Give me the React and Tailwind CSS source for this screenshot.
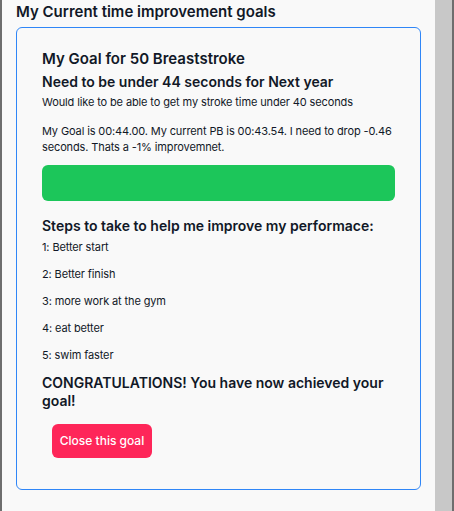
import React from 'react';

const steps = [
  '1: Better start',
  '2: Better finish',
  '3: more work at the gym',
  '4: eat better',
  '5: swim faster',
];

const GoalCard = () => {
  return (
    <div className="mt-[3px] rounded-md border border-[#2f86f7] px-[25px] pt-[21px] pb-[31px]">
      <h2 className="text-[15px] leading-5 font-semibold">My Goal for 50 Breaststroke</h2>
      <h3 className="text-[14px] leading-5 font-semibold mt-[3px]">Need to be under 44 seconds for Next year</h3>
      <p className="text-[11px] leading-4 tracking-[-0.12px] mt-[2px]">Would like to be able to get my stroke time under 40 seconds</p>
      <p className="text-[11px] leading-4 tracking-[-0.12px] mt-[13px]">
        My Goal is 00:44.00. My current PB is 00:43.54. I need to drop -0.46 seconds. Thats a -1% improvemnet.
      </p>
      <div className="mt-[10px] h-[36px] rounded-md bg-[#1cc65a]" />
      <h3 className="text-[14px] leading-5 font-semibold mt-[15px]">Steps to take to help me improve my performace:</h3>
      <div className="mt-[3px] flex flex-col gap-[11px]">
        {steps.map((s) => (
          <p key={s} className="text-[11px] leading-4 tracking-[-0.12px]">{s}</p>
        ))}
      </div>
      <h3 className="text-[14px] leading-[18px] font-semibold mt-[11px]">
        CONGRATULATIONS! You have now achieved your goal!
      </h3>
      <button className="mt-[14px] ml-[10px] h-[34px] w-[100px] rounded-md bg-[#fe2659] text-[12px] font-medium text-white">
        Close this goal
      </button>
    </div>
  );
};

export default function App() {
  return (
    <div className="flex h-[511px] w-[454px] overflow-hidden text-[#111827]" style={{ fontFamily: 'Inter, "Noto Sans", sans-serif' }}>
      <div className="w-[2px] bg-[#6e6e6e]" />
      <div className="flex-1 bg-[#f9f9f9] px-[14px]">
        <h1 className="text-[15px] leading-6 font-semibold">My Current time improvement goals</h1>
        <GoalCard />
      </div>
      <div className="w-[17px] bg-[#c8c8c8]" />
      <div className="w-[2px] bg-[#6e6e6e]" />
    </div>
  );
}
